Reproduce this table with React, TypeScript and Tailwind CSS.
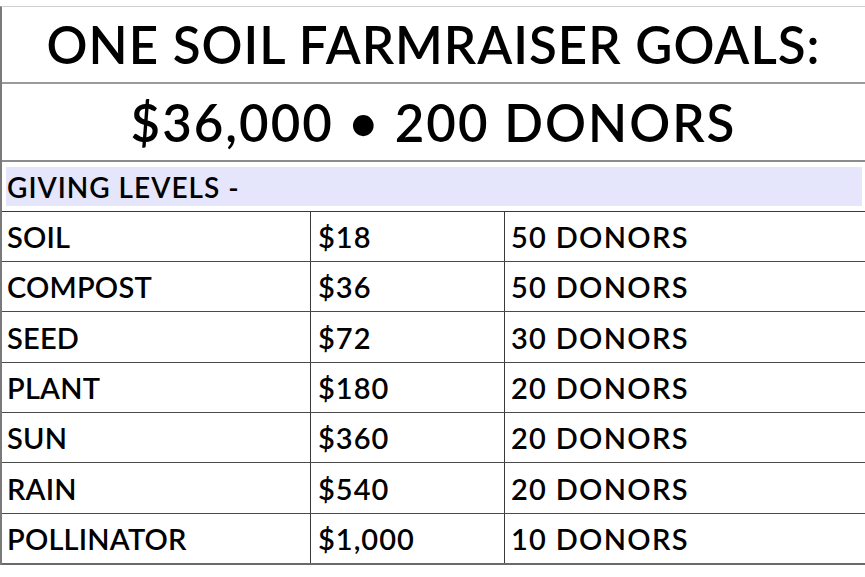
const LEVELS = [
  { name: "SOIL", amount: "$18", donors: "50 DONORS", h: "h-[50px]" },
  { name: "COMPOST", amount: "$36", donors: "50 DONORS", h: "h-[50px]" },
  { name: "SEED", amount: "$72", donors: "30 DONORS", h: "h-[51px]" },
  { name: "PLANT", amount: "$180", donors: "20 DONORS", h: "h-[50px]" },
  { name: "SUN", amount: "$360", donors: "20 DONORS", h: "h-[50px]" },
  { name: "RAIN", amount: "$540", donors: "20 DONORS", h: "h-[51px]" },
  { name: "POLLINATOR", amount: "$1,000", donors: "10 DONORS", h: "h-[51px]" },
];

export default function App() {
  return (
    <div
      className="w-[865px] h-[577px] bg-white text-black pt-[6px] overflow-hidden"
      style={{ fontFamily: "Lato, 'Liberation Sans', sans-serif" }}
    >
      <div className="border-t border-[#cfcfcf] border-l-2 border-l-[#7a7a7a]">
        {/* Headline rows */}
        <div className="h-[77px] flex items-center justify-center border-b-2 border-[#9a9a9a] text-[51px] font-semibold leading-none tracking-[1px]">
          ONE SOIL FARMRAISER GOALS:
        </div>
        <div className="h-[78px] flex items-center justify-center border-b-2 border-[#8c8c8c] text-[51px] font-semibold leading-none tracking-[2px]">
          $36,000 • 200 DONORS
        </div>

        {/* Giving levels band */}
        <div className="pt-[5px] pb-[5px] pl-[4px] pr-[3px] border-b border-[#3a3a3a]">
          <div className="h-[39px] bg-[#e5e5fb] flex items-center pl-[1px] text-[28px] font-semibold leading-none tracking-[1px]">
            GIVING LEVELS -
          </div>
        </div>

        {/* Level rows */}
        {LEVELS.map((lvl, i) => (
          <div
            key={lvl.name}
            className={`${lvl.h} flex text-[29px] font-semibold leading-none ${
              i === LEVELS.length - 1 ? "border-b-2 border-[#6a6a6a]" : "border-b border-[#4a4a4a]"
            }`}
          >
            <div className="w-[309px] flex items-center pl-[5px] border-r border-[#3a3a3a] tracking-[0.2px]">
              {lvl.name}
            </div>
            <div className="w-[194px] flex items-center pl-[7px] border-r border-[#3a3a3a] tracking-[1px]">
              {lvl.amount}
            </div>
            <div className="flex-1 flex items-center pl-[6px] tracking-[1.3px]">{lvl.donors}</div>
          </div>
        ))}
      </div>
    </div>
  );
}
